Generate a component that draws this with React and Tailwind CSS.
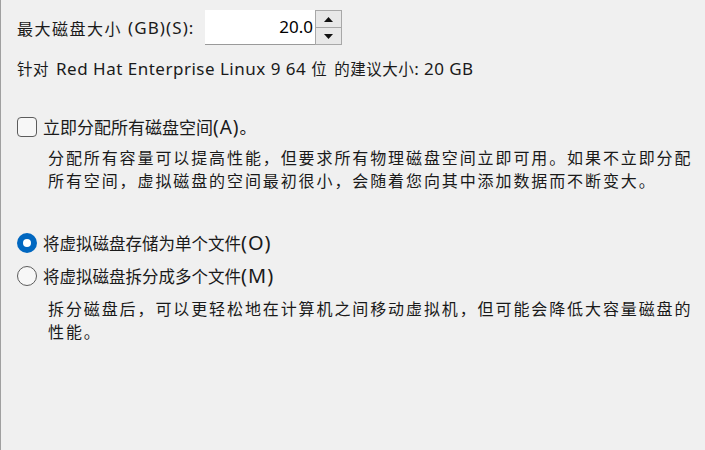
import React from "react";

const font = { fontFamily: '"Microsoft YaHei UI", "Noto Sans CJK SC", "Noto Sans", sans-serif' };
const latin = { fontFamily: '"Segoe UI", "Noto Sans", "Noto Sans CJK SC", sans-serif' };

const L = ({ children, size = "text-[17px]" }) => (
  <span className={size} style={latin}>
    {children}
  </span>
);

const Radio = ({ checked }) =>
  checked ? (
    <span className="w-[20px] h-[20px] rounded-full bg-[#0067c0] flex items-center justify-center shrink-0">
      <span className="w-[8px] h-[8px] rounded-full bg-white" />
    </span>
  ) : (
    <span className="w-[20px] h-[20px] rounded-full border border-[#5c5c5c] bg-[#f7f7f7] shrink-0" />
  );

export default function App() {
  return (
    <div
      className="w-[705px] h-[450px] bg-[#f0f0f0] border-l border-[#a0a0a0] text-[#1a1a1a] overflow-hidden"
      style={font}
    >
      {/* size row */}
      <div className="flex items-center h-[35px] mt-[10px] pl-[16px]">
        <span className="w-[188px] whitespace-nowrap flex items-center">
          <span className="text-[16px] tracking-[1.5px]">最大磁盘大小</span>
          <L size="ml-[6px] text-[17px] tracking-[1.1px]">(GB)(S):</L>
        </span>
        <div className="flex h-[35px]">
          <div className="w-[110px] bg-white border-b border-[#9a9a9a] flex items-center justify-end pr-[2px] text-[17px] text-black" style={latin}>
            20.0
          </div>
          <div className="w-[27px] flex flex-col border border-[#a8a8a8] bg-[#e8e8e8]">
            <button className="flex-1 flex items-center justify-center border-b border-[#a8a8a8]">
              <svg width="9" height="5" viewBox="0 0 9 5"><path d="M4.5 0L9 5H0z" fill="#111" /></svg>
            </button>
            <button className="flex-1 flex items-center justify-center">
              <svg width="9" height="5" viewBox="0 0 9 5"><path d="M0 0h9L4.5 5z" fill="#111" /></svg>
            </button>
          </div>
        </div>
      </div>

      <div className="pl-[16px] mt-[12px] text-[15.5px] tracking-[0.5px] leading-[23px] whitespace-nowrap flex items-baseline">
        <span>针对</span>
        <L size="ml-[7px] text-[17px] tracking-[0.5px]">Red Hat Enterprise Linux 9 64</L>
        <span className="ml-[5px]">位</span>
        <span className="ml-[7px]">的建议大小</span>
        <L size="text-[17px] tracking-[0.4px] whitespace-pre">: 20 GB</L>
      </div>

      {/* allocate */}
      <div className="pl-[16px] mt-[36px] flex items-center gap-[6px] h-[22px]">
        <span className="w-[20px] h-[20px] rounded-[4px] border-[1.5px] border-[#5c5c5c] bg-[#f7f7f7] shrink-0" />
        <span className="text-[17px]">
          立即分配所有磁盘空间<L size="text-[19px] tracking-[1px]">(A)</L>。
        </span>
      </div>
      <div className="pl-[47px] pr-[8px] mt-[8px] text-[16px] leading-[23px] tracking-[1.9px]">
        分配所有容量可以提高性能，但要求所有物理磁盘空间立即可用。如果不立即分配
        <br />
        所有空间，虚拟磁盘的空间最初很小，会随着您向其中添加数据而不断变大。
      </div>

      {/* file layout */}
      <div className="pl-[16px] mt-[40px] flex items-center gap-[6px] h-[22px]">
        <Radio checked />
        <span className="text-[16.5px]">
          将虚拟磁盘存储为单个文件<L size="text-[20px] tracking-[1px]">(O)</L>
        </span>
      </div>
      <div className="pl-[16px] mt-[11px] flex items-center gap-[6px] h-[22px]">
        <Radio />
        <span className="text-[16.5px]">
          将虚拟磁盘拆分成多个文件<L size="text-[20px] tracking-[1px]">(M)</L>
        </span>
      </div>
      <div className="pl-[47px] pr-[8px] mt-[10px] text-[16px] leading-[23px] tracking-[1.9px]">
        拆分磁盘后，可以更轻松地在计算机之间移动虚拟机，但可能会降低大容量磁盘的
        <br />
        性能。
      </div>
    </div>
  );
}
